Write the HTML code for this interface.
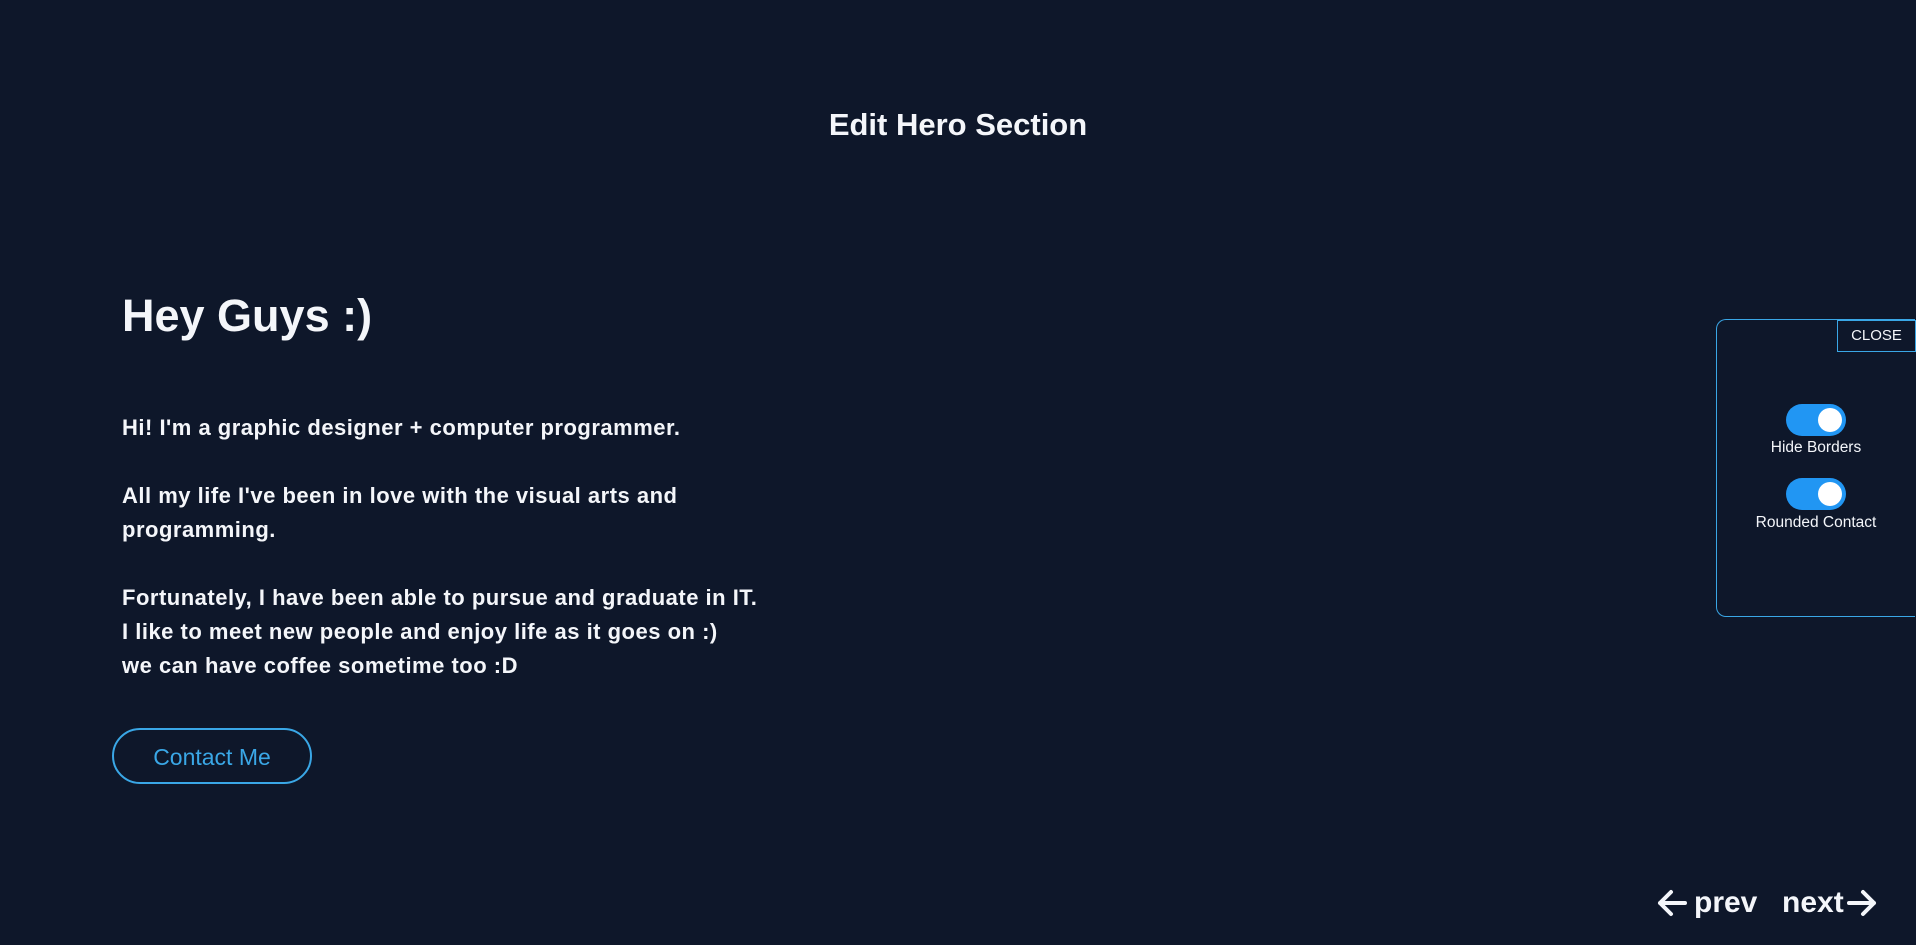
<!DOCTYPE html>
<html><head><meta charset="utf-8"><style>
html,body{margin:0;padding:0;}
body{width:1916px;height:945px;background:#0e172a;color:#f4f6fa;font-family:"Liberation Sans",sans-serif;position:relative;overflow:hidden;}
.t{position:absolute;left:0;width:1916px;text-align:center;top:107px;font-size:31px;font-weight:bold;}
h1{position:absolute;left:122px;top:290px;margin:0;font-size:45px;font-weight:bold;line-height:52px;}
.p{position:absolute;left:122px;top:411px;font-size:22px;font-weight:bold;line-height:34px;letter-spacing:0.5px;}
.btn{position:absolute;left:112px;top:728px;width:196px;height:52px;border:2px solid #3aa7e6;border-radius:28px;color:#3aa7e6;font-size:23px;text-align:center;line-height:54px;}
.panel{position:absolute;left:1716px;top:319px;width:198px;height:296px;border:1.5px solid #3aa7e6;border-radius:10px 0 0 10px;border-right:none;}
.close{position:absolute;left:1837px;top:320px;width:77px;height:30px;border:1.5px solid #3aa7e6;font-size:15px;line-height:30px;text-align:center;}
.tg{position:absolute;left:1786px;width:60px;height:32px;border-radius:16px;background:#2196f3;}
.tg::after{content:"";position:absolute;right:4px;top:4px;width:24px;height:24px;border-radius:50%;background:#fff;}
.lb{position:absolute;left:1716px;width:200px;text-align:center;font-size:15.5px;}
.nav{position:absolute;top:883px;font-size:30px;font-weight:bold;line-height:40px;}
svg.a{position:absolute;top:888px;}
</style></head><body>
<div class="t">Edit Hero Section</div>
<h1>Hey Guys :)</h1>
<div class="p">Hi! I'm a graphic designer + computer programmer.<br><br>All my life I've been in love with the visual arts and<br>programming.<br><br>Fortunately, I have been able to pursue and graduate in IT.<br>I like to meet new people and enjoy life as it goes on :)<br>we can have coffee sometime too :D</div>
<div class="btn">Contact Me</div>
<div class="panel"></div>
<div class="close">CLOSE</div>
<div class="tg" style="top:404px"></div>
<div class="lb" style="top:439px">Hide Borders</div>
<div class="tg" style="top:478px"></div>
<div class="lb" style="top:514px">Rounded Contact</div>
<svg class="a" style="left:1656px" width="32" height="30" viewBox="0 0 32 30"><path d="M29 15H4M15 4L4 15l11 11" fill="none" stroke="#f4f6fa" stroke-width="4" stroke-linecap="round" stroke-linejoin="round"/></svg>
<div class="nav" style="left:1694px">prev</div>
<div class="nav" style="left:1782px">next</div>
<svg class="a" style="left:1846px" width="32" height="30" viewBox="0 0 32 30"><path d="M3 15h25M17 4l11 11-11 11" fill="none" stroke="#f4f6fa" stroke-width="4" stroke-linecap="round" stroke-linejoin="round"/></svg>
</body></html>
